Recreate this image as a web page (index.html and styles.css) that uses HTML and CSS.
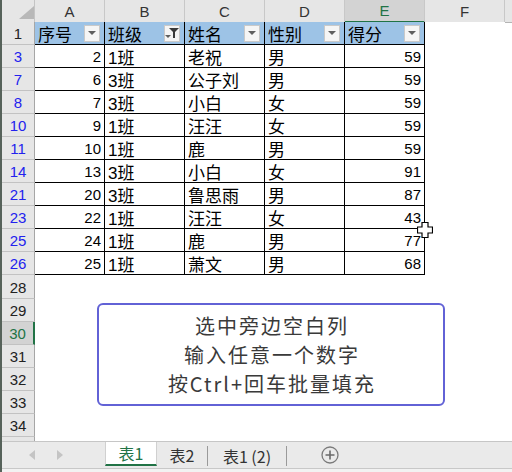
FILE: index.html
```html
<!DOCTYPE html>
<html>
<head>
<meta charset="utf-8">
<link rel="stylesheet" href="styles.css">
</head>
<body>
<div class="app">
  <div class="sheet">
    <div class="row colhdr">
      <div class="corner"><svg width="33" height="22" viewBox="0 0 33 22"><polygon points="17,19 32,19 32,6" fill="#b8b8b8"/></svg></div>
      <div class="ch">A</div>
      <div class="ch">B</div>
      <div class="ch">C</div>
      <div class="ch">D</div>
      <div class="ch sel">E</div>
      <div class="ch">F</div>
      <div class="ch last"></div>
    </div>

    <div class="row">
      <div class="rh">1</div>
      <div class="c hd"><span>序号</span><span class="fb"><svg width="8" height="4" viewBox="0 0 8 4"><polygon points="0,0 8,0 4,4" fill="#5f5f5f"/></svg></span></div>
      <div class="c hd"><span>班级</span><span class="fb"><svg width="14" height="12" viewBox="0 0 14 12"><polygon points="4,1 14,1 10,5 10,11 8,11 8,5" fill="#3a3a3a"/><polygon points="0,8 6,8 3,11" fill="#5f5f5f"/></svg></span></div>
      <div class="c hd"><span>姓名</span><span class="fb"><svg width="8" height="4" viewBox="0 0 8 4"><polygon points="0,0 8,0 4,4" fill="#5f5f5f"/></svg></span></div>
      <div class="c hd"><span>性别</span><span class="fb"><svg width="8" height="4" viewBox="0 0 8 4"><polygon points="0,0 8,0 4,4" fill="#5f5f5f"/></svg></span></div>
      <div class="c hd"><span>得分</span><span class="fb"><svg width="8" height="4" viewBox="0 0 8 4"><polygon points="0,0 8,0 4,4" fill="#5f5f5f"/></svg></span></div>
      <div class="e"></div>
    </div>

    <div class="row"><div class="rh f">3</div><div class="c n">2</div><div class="c t">1班</div><div class="c t">老祝</div><div class="c t">男</div><div class="c n">59</div><div class="e"></div></div>
    <div class="row"><div class="rh f">7</div><div class="c n">6</div><div class="c t">3班</div><div class="c t">公子刘</div><div class="c t">男</div><div class="c n">59</div><div class="e"></div></div>
    <div class="row"><div class="rh f">8</div><div class="c n">7</div><div class="c t">3班</div><div class="c t">小白</div><div class="c t">女</div><div class="c n">59</div><div class="e"></div></div>
    <div class="row"><div class="rh f">10</div><div class="c n">9</div><div class="c t">1班</div><div class="c t">汪汪</div><div class="c t">女</div><div class="c n">59</div><div class="e"></div></div>
    <div class="row"><div class="rh f">11</div><div class="c n">10</div><div class="c t">1班</div><div class="c t">鹿</div><div class="c t">男</div><div class="c n">59</div><div class="e"></div></div>
    <div class="row"><div class="rh f">14</div><div class="c n">13</div><div class="c t">3班</div><div class="c t">小白</div><div class="c t">女</div><div class="c n">91</div><div class="e"></div></div>
    <div class="row"><div class="rh f">21</div><div class="c n">20</div><div class="c t">3班</div><div class="c t">鲁思雨</div><div class="c t">男</div><div class="c n">87</div><div class="e"></div></div>
    <div class="row"><div class="rh f">23</div><div class="c n">22</div><div class="c t">1班</div><div class="c t">汪汪</div><div class="c t">女</div><div class="c n">43</div><div class="e"></div></div>
    <div class="row"><div class="rh f">25</div><div class="c n">24</div><div class="c t">1班</div><div class="c t">鹿</div><div class="c t">男</div><div class="c n">77</div><div class="e"></div></div>
    <div class="row"><div class="rh f">26</div><div class="c n">25</div><div class="c t">1班</div><div class="c t">萧文</div><div class="c t">男</div><div class="c n">68</div><div class="e"></div></div>

    <div class="row tall"><div class="rh">28</div><div class="blank"></div></div>
    <div class="row"><div class="rh">29</div><div class="blank"></div></div>
    <div class="row"><div class="rh sel">30</div><div class="blank"></div></div>
    <div class="row"><div class="rh">31</div><div class="blank"></div></div>
    <div class="row"><div class="rh">32</div><div class="blank"></div></div>
    <div class="row"><div class="rh">33</div><div class="blank"></div></div>
    <div class="row"><div class="rh">34</div><div class="blank"></div></div>
    <div class="row"><div class="rh"></div><div class="blank"></div></div>
  </div>

  <div class="tabs">
    <div class="nav">
      <svg width="6" height="10" viewBox="0 0 6 10"><polygon points="6,0 6,10 0,5" fill="#c4c4c4"/></svg>
      <svg width="6" height="10" viewBox="0 0 6 10"><polygon points="0,0 0,10 6,5" fill="#c4c4c4"/></svg>
    </div>
    <div class="tab active">表1</div>
    <div class="tab t2">表2</div>
    <div class="tab t3">表1 (2)</div>
    <div class="add"><svg width="18" height="18" viewBox="0 0 18 18"><circle cx="9" cy="9" r="8" fill="none" stroke="#7a7a7a" stroke-width="1.3"/><path d="M9 4.5V13.5M4.5 9H13.5" stroke="#6a6a6a" stroke-width="1.6"/></svg></div>
  </div>
  <div class="status"></div>

  <div class="note">
    <div>选中旁边空白列</div>
    <div>输入任意一个数字</div>
    <div>按Ctrl+回车批量填充</div>
  </div>

  <svg class="cursor" width="16" height="16" viewBox="0 0 16 16"><polygon points="5,0.5 11,0.5 11,5 15.5,5 15.5,11 11,11 11,15.5 5,15.5 5,11 0.5,11 0.5,5 5,5" fill="#fff" stroke="#000" stroke-width="1.2"/></svg>
</div>
</body>
</html>
```

FILE: styles.css
```css
html, body {
  margin: 0;
  padding: 0;
  background: #fff;
}
.app {
  position: relative;
  width: 512px;
  height: 472px;
  overflow: hidden;
  display: flex;
  flex-direction: column;
  font-family: "Liberation Sans", "Noto Sans CJK SC", sans-serif;
  color: #000;
  border-left: 2px solid #56625a;
  box-sizing: border-box;
}
.sheet {
  flex: 1;
  overflow: hidden;
}
.row {
  display: grid;
  grid-template-columns: 33px 70px 80px 80px 80px 80px 80px 1fr;
  height: 23px;
  box-sizing: border-box;
}
.row.tall { height: 24px; }
.colhdr {
  height: 22px;
  background: #e6e6e6;
}
.corner {
  border-right: 1px solid #c4c4c4;
  border-bottom: 1px solid #b4b4b4;
  box-sizing: border-box;
}
.corner svg { display: block; }
.ch {
  border-right: 1px solid #c8c8c8;
  border-bottom: 1px solid #b4b4b4;
  box-sizing: border-box;
  display: flex;
  align-items: center;
  justify-content: center;
  font-size: 15px;
  color: #333;
}
.ch.sel {
  background: #d3d3d3;
  color: #217346;
  border-bottom: 2px solid #217346;
}
.ch.last { border-right: none; }
.rh {
  background: #e6e6e6;
  border-right: 1px solid #a6a6a6;
  border-bottom: 1px solid #c2c2c2;
  box-sizing: border-box;
  display: flex;
  align-items: center;
  justify-content: center;
  font-size: 15px;
  color: #222;
  padding-top: 1px;
}
.rh.f { color: #2222ee; }
.rh.sel {
  background: #d3d3d3;
  color: #217346;
  border-right: 2px solid #217346;
}
.c {
  border-right: 1px solid #000;
  border-bottom: 1px solid #000;
  box-sizing: border-box;
  display: flex;
  align-items: center;
  padding-top: 1px;
  white-space: nowrap;
  overflow: hidden;
}
.c.n {
  justify-content: flex-end;
  padding-right: 3px;
  font-size: 15px;
}
.c.t {
  padding-left: 3px;
  font-size: 17px;
}
.c.hd {
  background: #9dc3e6;
  font-size: 17px;
  padding-left: 3px;
  padding-right: 4px;
  padding-top: 0;
}
.fb {
  margin-left: auto;
  width: 16px;
  height: 17px;
  background: #f5f5f5;
  border: 1px solid #c9c9c9;
  box-sizing: border-box;
  display: flex;
  align-items: center;
  justify-content: center;
}
.fb svg { display: block; }
.e, .blank { background: #fff; }
.blank { grid-column: 2 / -1; }

.tabs {
  height: 27px;
  background: #eaeaea;
  border-top: 1px solid #c6c6c6;
  box-sizing: border-box;
  display: flex;
  align-items: stretch;
  font-family: "Noto Sans CJK SC", "Liberation Sans", sans-serif;
  font-size: 16px;
  color: #333;
}
.nav {
  width: 103px;
  display: flex;
  align-items: center;
  gap: 22px;
  padding-left: 27px;
  box-sizing: border-box;
}
.tab {
  display: flex;
  align-items: center;
  justify-content: center;
  box-sizing: border-box;
  line-height: 1;
}
.tab.active {
  width: 52px;
  background: #fff;
  color: #217346;
  border-bottom: 2px solid #217346;
  border-left: 1px solid #d0d0d0;
  border-right: 1px solid #d0d0d0;
  margin-bottom: 2px;
}
.tab.t2 {
  width: 50px;
}
.tab.t3 {
  width: 80px;
  border-left: 1px solid #9a9a9a;
  border-right: 1px solid #9a9a9a;
  margin: 4px 0 2px;
}
.add {
  width: 86px;
  display: flex;
  align-items: center;
  justify-content: center;
}
.add svg { display: block; }
.status {
  height: 4px;
  background: #f2f2f2;
  border-top: 1px solid #c8c8c8;
  box-sizing: border-box;
}

.note {
  position: absolute;
  left: 95px;
  top: 303px;
  width: 348px;
  height: 103px;
  box-sizing: border-box;
  border: 2px solid #6262d6;
  border-radius: 6px;
  background: #fff;
  display: flex;
  flex-direction: column;
  align-items: center;
  justify-content: center;
  font-family: "Noto Sans CJK SC", "Liberation Sans", sans-serif;
  font-size: 20px;
  letter-spacing: 2px;
  line-height: 29px;
  color: #3a3a3a;
  padding-left: 2px;
}
.cursor {
  position: absolute;
  left: 415px;
  top: 222px;
}
```
